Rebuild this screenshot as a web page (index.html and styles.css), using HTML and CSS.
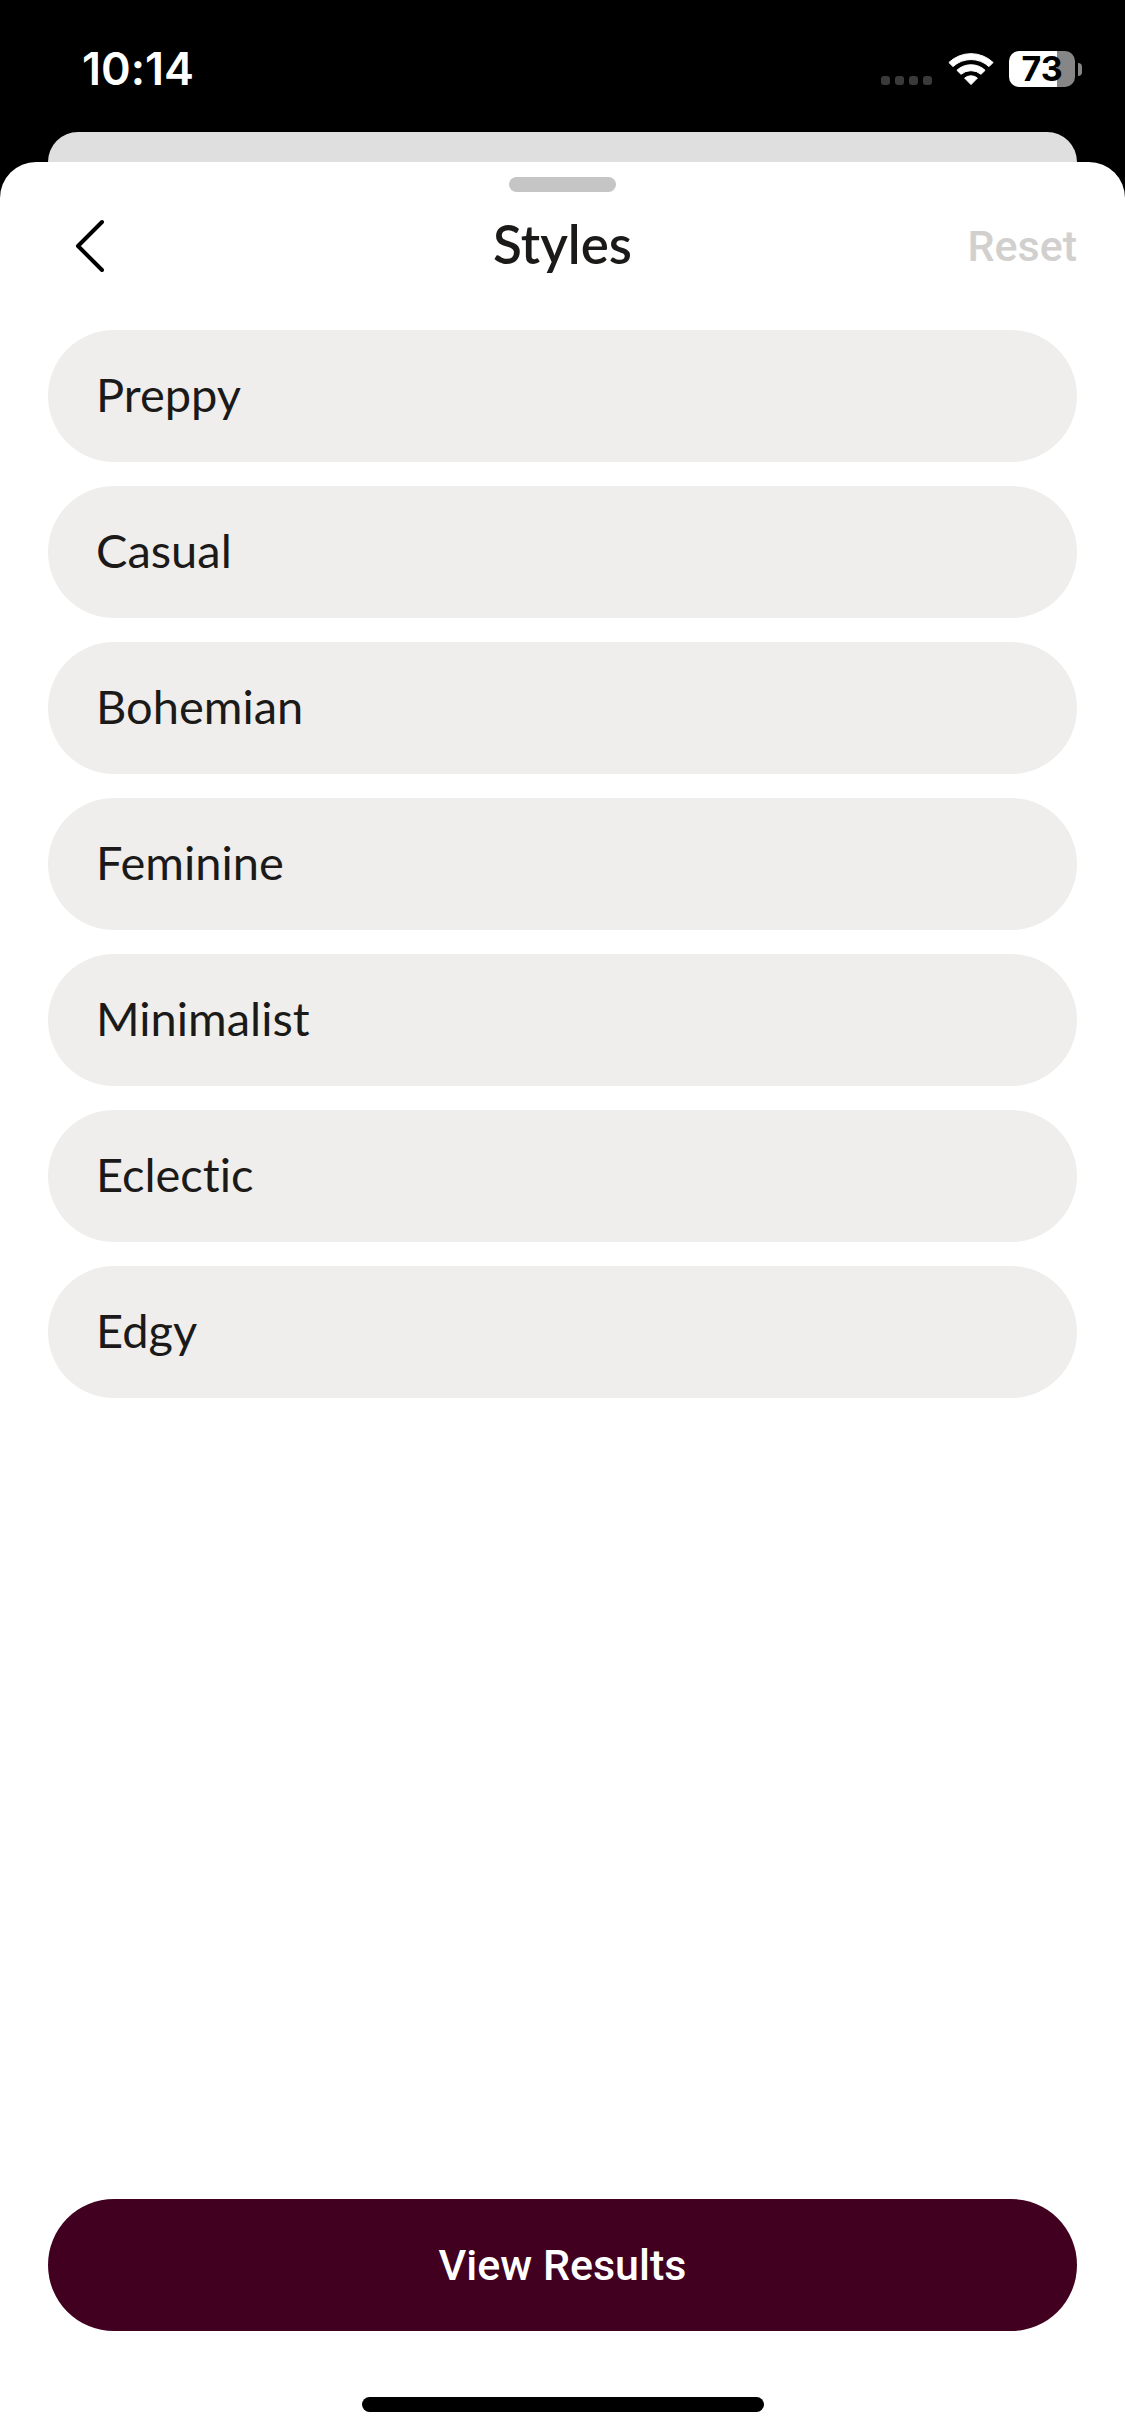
FILE: index.html
```html
<!DOCTYPE html>
<html lang="en">
<head>
    <meta charset="UTF-8">
    <meta name="viewport" content="width=device-width, initial-scale=1">
    <title>Styles</title>
    <link rel="stylesheet" href="styles.css">
</head>
<body>
    <div class="status-bar">
        <span class="time">10:14</span>
        <div class="status-icons">
            <svg class="signal" width="52" height="36" viewBox="0 0 52 36" fill="#3a3a3a" aria-hidden="true">
                <rect x="0" y="25" width="9" height="9" rx="3"/>
                <rect x="14" y="25" width="9" height="9" rx="3"/>
                <rect x="28" y="25" width="9" height="9" rx="3"/>
                <rect x="42" y="25" width="9" height="9" rx="3"/>
            </svg>
            <svg class="wifi" width="46" height="36" viewBox="0 0 46 36" fill="#fff" stroke="#fff" stroke-width="1" stroke-linejoin="round" aria-hidden="true">
                <path d="M.9 11.5A32 32 0 0 1 45.1 11.5L41 15.6A26.5 26.5 0 0 0 5 15.6Z"/>
                <path d="M8.9 19.3A20.8 20.8 0 0 1 37.1 19.3L33 23.3A15.5 15.5 0 0 0 13 23.3Z"/>
                <path d="M16.6 27.1A10 10 0 0 1 29.4 27.1L23 33.6Z"/>
            </svg>
            <div class="battery">
                <span class="battery-level">73</span>
                <span class="battery-cap"></span>
            </div>
        </div>
    </div>

    <div class="back-card"></div>

    <main class="sheet">
        <div class="grabber"></div>
        <header class="header">
            <button class="back" type="button" aria-label="Back">
                <svg width="30" height="54" viewBox="0 0 30 54" fill="none" stroke="#000" stroke-width="4" stroke-linecap="round" stroke-linejoin="round" aria-hidden="true">
                    <path d="M27 3L3 27L27 51"/>
                </svg>
            </button>
            <h1 class="title">Styles</h1>
            <button class="reset" type="button" disabled>Reset</button>
        </header>

        <ul class="options">
            <li><button class="option" type="button">Preppy</button></li>
            <li><button class="option" type="button">Casual</button></li>
            <li><button class="option" type="button">Bohemian</button></li>
            <li><button class="option" type="button">Feminine</button></li>
            <li><button class="option" type="button">Minimalist</button></li>
            <li><button class="option" type="button">Eclectic</button></li>
            <li><button class="option" type="button">Edgy</button></li>
        </ul>

        <footer class="footer">
            <button class="view-results" type="button">View Results</button>
            <div class="home-indicator"></div>
        </footer>
    </main>
</body>
</html>
```
FILE: styles.css
```css
* {
    box-sizing: border-box;
}
body {
    margin: 0;
    min-height: 100vh;
    display: flex;
    flex-direction: column;
    background-color: #000;
    color: #1b1a19;
    font-family: Lato, "Open Sans", sans-serif;
    font-variant-ligatures: none;
}
button {
    margin: 0;
    padding: 0;
    border: 0;
    background: none;
    color: inherit;
    font: inherit;
    font-variant-ligatures: none;
}

/* status bar */
.status-bar {
    height: 132px;
    padding: 6px 43px 0 82px;
    display: flex;
    align-items: center;
    justify-content: space-between;
    color: #fff;
    font-family: Inter, "Liberation Sans", sans-serif;
}
.time {
    font-size: 45px;
    font-weight: 600;
    line-height: 48px;
}
.status-icons {
    display: flex;
    align-items: center;
    gap: 15px;
}
.battery {
    display: flex;
    align-items: center;
    gap: 3px;
}
.battery-level {
    width: 66px;
    height: 36px;
    border-radius: 10px;
    background: linear-gradient(to right, #fff 73%, #868686 73%);
    color: #000;
    font-size: 34px;
    font-weight: 700;
    line-height: 36px;
    text-align: center;
}
.battery-cap {
    width: 4px;
    height: 13px;
    border-radius: 0 4px 4px 0;
    background-color: #868686;
}

/* card peeking out behind the sheet */
.back-card {
    height: 30px;
    margin: 0 48px;
    border-radius: 30px 30px 0 0;
    background-color: #dfdfdf;
}

/* sheet */
.sheet {
    flex: 1;
    display: flex;
    flex-direction: column;
    padding: 15px 48px 24px;
    border-radius: 36px 36px 0 0;
    background-color: #fff;
}
.grabber {
    width: 107px;
    height: 15px;
    margin: 0 auto;
    border-radius: 8px;
    background-color: #c5c5c6;
}
.header {
    height: 108px;
    display: grid;
    grid-template-columns: 1fr auto 1fr;
    align-items: center;
}
.back {
    width: 84px;
    height: 84px;
    display: flex;
    align-items: center;
    justify-content: center;
}
.title {
    margin: 0;
    padding-bottom: 4px;
    font-size: 53px;
    font-weight: 600;
    line-height: 60px;
}
.reset {
    justify-self: end;
    color: #d2d0ce;
    font-family: Roboto, "Liberation Sans", sans-serif;
    font-size: 43px;
    font-weight: 500;
}
.options {
    margin: 30px 0 48px;
    padding: 0;
    display: flex;
    flex-direction: column;
    gap: 24px;
    list-style: none;
}
.option {
    display: block;
    width: 100%;
    height: 132px;
    padding: 0 48px 4px;
    border-radius: 66px;
    background-color: #efeeec;
    font-size: 47px;
    line-height: 60px;
    text-align: left;
}
.footer {
    margin-top: auto;
}
.view-results {
    display: block;
    width: 100%;
    height: 132px;
    border-radius: 66px;
    background-color: #41001f;
    color: #fff;
    font-family: Roboto, "Liberation Sans", sans-serif;
    font-size: 43px;
    font-weight: 500;
}
.home-indicator {
    width: 402px;
    height: 15px;
    margin: 66px auto 0;
    border-radius: 8px;
    background-color: #000;
}
```
